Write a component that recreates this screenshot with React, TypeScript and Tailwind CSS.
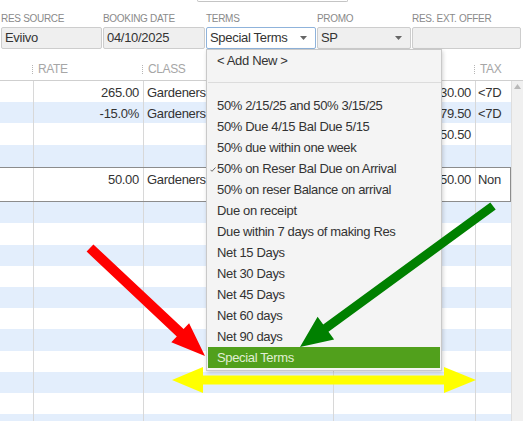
import React from "react";

type Pt = [number, number];

function arrowPoints(x1: number, y1: number, x2: number, y2: number, sw: number, hl: number, hw: number): string {
  const dx = x2 - x1;
  const dy = y2 - y1;
  const L = Math.hypot(dx, dy);
  const ux = dx / L;
  const uy = dy / L;
  const px = -uy;
  const py = ux;
  const bx = x2 - ux * hl;
  const by = y2 - uy * hl;
  const pts: Pt[] = [
    [x1 + (px * sw) / 2, y1 + (py * sw) / 2],
    [bx + (px * sw) / 2, by + (py * sw) / 2],
    [bx + px * hw, by + py * hw],
    [x2, y2],
    [bx - px * hw, by - py * hw],
    [bx - (px * sw) / 2, by - (py * sw) / 2],
    [x1 - (px * sw) / 2, y1 - (py * sw) / 2],
  ];
  return pts.map((p) => `${p[0].toFixed(1)},${p[1].toFixed(1)}`).join(" ");
}

function Caret() {
  return (
    <svg width="7" height="4" viewBox="0 0 7 4" className="shrink-0">
      <polygon points="0,0 7,0 3.5,4" fill="#666" />
    </svg>
  );
}

type Row = {
  h: string;
  blue?: boolean;
  selected?: boolean;
  rate?: string;
  cls?: string;
  amt?: string;
  tax?: string;
};

const rows: Row[] = [
  { h: "h-[21px]", rate: "265.00", cls: "Gardeners:", amt: "130.00", tax: "<7D" },
  { h: "h-[21px]", blue: true, rate: "-15.0%", cls: "Gardeners:", amt: "179.50", tax: "<7D" },
  { h: "h-[22px]", amt: "150.50" },
  { h: "h-[22px]", blue: true },
  { h: "h-[35px]", selected: true, rate: "50.00", cls: "Gardeners:", amt: "150.00", tax: "Non" },
  { h: "h-[21px]", blue: true },
  { h: "h-[22px]" },
  { h: "h-[21px]", blue: true },
  { h: "h-[21px]" },
  { h: "h-[21px]", blue: true },
  { h: "h-[21px]" },
  { h: "h-[22px]", blue: true },
  { h: "h-[21px]" },
  { h: "h-[21px]", blue: true },
  { h: "h-[21px]" },
  { h: "h-[21px]", blue: true },
];

const terms = [
  "50% 2/15/25 and 50% 3/15/25",
  "50% Due 4/15 Bal Due 5/15",
  "50% due within one week",
  "50% on Reser Bal Due on Arrival",
  "50% on reser Balance on arrival",
  "Due on receipt",
  "Due within 7 days of making Res",
  "Net 15 Days",
  "Net 30 Days",
  "Net 45 Days",
  "Net 60 days",
  "Net 90 days",
];

export default function App() {
  return (
    <div className="relative w-[523px] h-[421px] overflow-hidden bg-white font-['Liberation_Sans',Arial,sans-serif] text-[#333]">
      {/* top clipped box edge */}
      <div className="ml-[197px] w-[151px] h-[2px] border-b border-x border-[#c4c4c4] rounded-b-[2px]" />

      {/* form row */}
      <div className="flex gap-[1px] pl-[1px] mt-[10px]">
        {[
          { label: "RES SOURCE", w: "w-[101px]", val: "Eviivo" },
          { label: "BOOKING DATE", w: "w-[102px]", val: "04/10/2025" },
          { label: "TERMS", w: "w-[110px]", val: "Special Terms", focus: true, caret: true },
          { label: "PROMO", w: "w-[94px]", val: "SP", caret: true },
          { label: "RES. EXT. OFFER", w: "w-[109px]", val: "" },
        ].map((f) => (
          <div key={f.label} className={`${f.w} flex flex-col`}>
            <div className="h-[13px] text-[10px] leading-[13px] tracking-[-0.3px] text-[#8a8a8a] whitespace-nowrap">
              {f.label}
            </div>
            <div
              className={`mt-[2px] h-[22px] flex items-center pl-[3px] pr-[8px] rounded-[2px] border text-[13px] tracking-[-0.3px] ${
                f.focus ? "bg-white border-[#8fb3db]" : "bg-[#efefef] border-[#cdcdcd]"
              }`}
            >
              <span className="flex-1 whitespace-nowrap overflow-hidden">{f.val}</span>
              {f.caret && <Caret />}
            </div>
          </div>
        ))}
      </div>

      {/* table header */}
      <div className="flex h-[32px] border-b border-[#cfcfcf] text-[12px] tracking-[-0.4px] text-[#a6a6a6]">
        {[
          { w: "w-[34px]", t: "" },
          { w: "w-[110px]", t: "RATE" },
          { w: "w-[190px]", t: "CLASS" },
          { w: "w-[142px]", t: "AMOUNT" },
          { w: "w-[47px]", t: "TAX" },
        ].map((c, i) => (
          <div key={i} className={`${c.w} relative flex items-end pb-[4px]`}>
            {c.t && <span className="pl-[4px] leading-[14px]">{c.t}</span>}
            {i !== 4 && (
              <div className="absolute right-[1px] bottom-[6px] h-[9px] border-l border-dotted border-[#b5b5b5]" />
            )}
          </div>
        ))}
      </div>

      {/* body */}
      <div className="flex">
        <div className="flex flex-col w-[511px]">
          {rows.map((r, i) => (
            <div
              key={i}
              className={`${r.h} flex text-[13px] tracking-[-0.3px] ${r.blue ? "bg-[#e3eefc]" : "bg-white"} ${
                r.selected ? "border-y border-r border-[#8c8c8c]" : ""
              }`}
            >
              <div className="w-[34px] shrink-0 border-r border-[#d8d8d8]" />
              <div className="w-[110px] shrink-0 border-r border-[#d8d8d8] text-right pr-[4px] pt-[2px]">{r.rate}</div>
              <div className="w-[190px] shrink-0 border-r border-[#d8d8d8] pl-[3px] pt-[2px] whitespace-nowrap overflow-hidden">
                {r.cls}
              </div>
              <div className="w-[142px] shrink-0 border-r border-[#d8d8d8] text-right pr-[4px] pt-[2px]">{r.amt}</div>
              <div className="flex-1 pl-[2px] pt-[2px] whitespace-nowrap overflow-hidden">{r.tax}</div>
            </div>
          ))}
        </div>
        <div className="w-[12px] h-[400px] bg-[#f0f0f0] border-l border-[#dedede] flex justify-center pt-[3px]">
          <svg width="7" height="5" viewBox="0 0 7 5">
            <polygon points="0,5 7,5 3.5,0" fill="#b9b9b9" />
          </svg>
        </div>
      </div>

      {/* dropdown menu */}
      <div className="absolute left-[206px] top-[49px] w-[236px] h-[322px] bg-[#f4f4f4] border border-[#c9c9c9] shadow-[1px_2px_4px_rgba(0,0,0,0.18)] text-[13px] tracking-[-0.35px] text-[#333]">
        <div className="h-[22px] flex items-center pl-[10px]">&lt; Add New &gt;</div>
        <div className="mt-[10px] ml-[1px] h-[1px] bg-[#dcdcdc]" />
        <div className="mt-[12px] flex flex-col">
          {terms.map((t, i) => (
            <div key={t} className="relative h-[21px] flex items-center pl-[10px] whitespace-nowrap">
              {i === 3 && (
                <svg className="absolute left-[3px] top-[9px]" width="6" height="5" viewBox="0 0 6 5">
                  <path d="M0.5 2.8 L2 4.3 L5.5 0.5" fill="none" stroke="#666" strokeWidth="1" />
                </svg>
              )}
              {t}
            </div>
          ))}
          <div className="mx-[1px] h-[21px] flex items-center pl-[9px] bg-[#51a01c] text-[#e0eed4]">Special Terms</div>
        </div>
      </div>

      {/* annotation arrows */}
      <svg className="absolute left-0 top-0 pointer-events-none" width="523" height="421" viewBox="0 0 523 421">
        <polygon points={arrowPoints(90, 248, 205, 356, 10, 34, 13)} fill="#ff0000" />
        <polygon points={arrowPoints(493, 206, 300, 347, 9, 32, 14)} fill="#008000" />
        <polygon
          points="172,380 203,367 203,375.5 444,375.5 444,367 476,380 444,393 444,384.5 203,384.5 203,393"
          fill="#ffff00"
        />
      </svg>
    </div>
  );
}
